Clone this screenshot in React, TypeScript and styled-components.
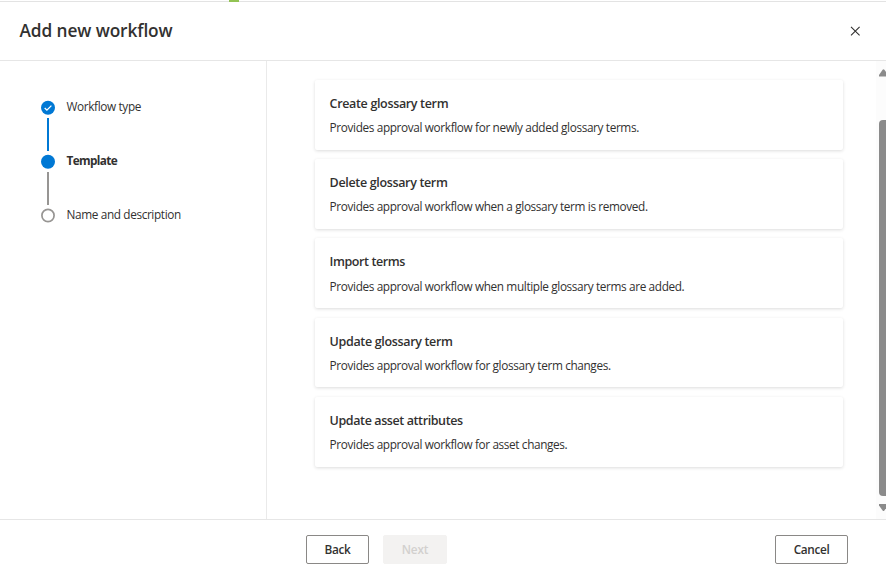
import React from "react";
import styled, { createGlobalStyle } from "styled-components";

const GlobalStyle = createGlobalStyle`
  * { box-sizing: border-box; }
  body {
    margin: 0;
    overflow: hidden;
    background: #fff;
    color: #323130;
    font-family: "Open Sans", "Noto Sans", sans-serif;
    font-size: 11.8px;
  }
`;

const Page = styled.div`
  width: 886px;
  height: 576px;
  display: flex;
  flex-direction: column;
  overflow: hidden;
`;

const TopEdge = styled.div`
  height: 2px;
  flex: none;
  border-bottom: 1px solid #e3e3e3;
  padding-left: 229px;
`;

const GreenMark = styled.div`
  width: 10px;
  height: 2px;
  background: #92c353;
`;

const Header = styled.header`
  height: 59px;
  flex: none;
  display: flex;
  align-items: center;
  justify-content: space-between;
  padding: 0 26px 0 19.5px;
  border-bottom: 1px solid #e6e6e6;
`;

const Title = styled.h1<{ $track: number }>`
  margin: 0;
  font-size: 17.3px;
  line-height: 24px;
  font-weight: 600;
  letter-spacing: ${(p) => p.$track}px;
  white-space: nowrap;
`;

const CloseButton = styled.button`
  display: flex;
  padding: 0;
  border: 0;
  background: none;
`;

const Body = styled.div`
  height: 458px;
  flex: none;
  display: flex;
`;

const Sidebar = styled.nav`
  width: 267px;
  flex: none;
  border-right: 1px solid #eaeaea;
  padding: 39px 0 0 41px;
`;

const Step = styled.div`
  height: 54px;
  display: flex;
  gap: 11.5px;
`;

const Rail = styled.div`
  width: 14px;
  display: flex;
  flex-direction: column;
  align-items: center;
  gap: 3px;
`;

const Marker = styled.svg`
  display: block;
  flex: none;
`;

const Connector = styled.div<{ $done?: boolean }>`
  width: 2px;
  height: 33px;
  background: ${(p) => (p.$done ? "#0078d4" : "#979593")};
`;

const StepLabel = styled.span<{ $current?: boolean; $track: number }>`
  line-height: 16px;
  margin-top: -2px;
  font-weight: ${(p) => (p.$current ? 700 : 400)};
  letter-spacing: ${(p) => p.$track}px;
  white-space: nowrap;
`;

const Content = styled.main`
  flex: 1;
  padding: 19px 0 0 48px;
`;

const CardList = styled.div`
  width: 528px;
  display: flex;
  flex-direction: column;
  gap: 9.4px;
`;

const Card = styled.article`
  height: 69.8px;
  padding: 15px 15px 0 14.6px;
  border-radius: 2px;
  background: #fff;
  box-shadow: 0 1px 3.6px rgba(0, 0, 0, 0.14);
`;

const CardTitle = styled.h2<{ $track: number }>`
  margin: 0 0 7.2px;
  font-size: 12.5px;
  line-height: 17px;
  font-weight: 600;
  letter-spacing: ${(p) => p.$track}px;
  white-space: nowrap;
`;

const CardText = styled.p<{ $track: number }>`
  margin: 0;
  line-height: 16px;
  letter-spacing: ${(p) => p.$track}px;
  white-space: nowrap;
`;

const ScrollTrack = styled.div`
  width: 10px;
  flex: none;
  display: flex;
  flex-direction: column;
  padding: 8px 0 7px 3px;
  background: #fcfcfc;
  overflow: hidden;
`;

const ScrollThumb = styled.div`
  width: 10px;
  height: 376px;
  flex: none;
  margin: 43px 0 8px;
  border-radius: 4px;
  background: #8b8b8b;
`;

const Footer = styled.footer`
  height: 57px;
  flex: none;
  display: flex;
  align-items: flex-start;
  gap: 14px;
  padding: 15px 38px 0 306px;
  border-top: 1px solid #e6e6e6;
`;

const Button = styled.button<{ $width: number; $track: number }>`
  width: ${(p) => p.$width}px;
  height: 29px;
  padding: 0 0 2px;
  border: 1px solid #8a8886;
  border-radius: 2px;
  background: #fff;
  color: #323130;
  font: 600 11.8px/16px "Open Sans", "Noto Sans", sans-serif;
  letter-spacing: ${(p) => p.$track}px;

  &:disabled {
    border-color: #f3f2f1;
    background: #f3f2f1;
    color: #d2d0ce;
  }
`;

const CancelButton = styled(Button)`
  margin-left: auto;
`;

type Status = "done" | "current" | "pending";

const steps: { label: string; status: Status; track: number }[] = [
  { label: "Workflow type", status: "done", track: -0.36 },
  { label: "Template", status: "current", track: -0.65 },
  { label: "Name and description", status: "pending", track: -0.37 },
];

const templates = [
  { title: "Create glossary term", tt: -0.34, text: "Provides approval workflow for newly added glossary terms.", dt: -0.365 },
  { title: "Delete glossary term", tt: -0.34, text: "Provides approval workflow when a glossary term is removed.", dt: -0.37 },
  { title: "Import terms", tt: -0.42, text: "Provides approval workflow when multiple glossary terms are added.", dt: -0.37 },
  { title: "Update glossary term", tt: -0.34, text: "Provides approval workflow for glossary term changes.", dt: -0.365 },
  { title: "Update asset attributes", tt: -0.4, text: "Provides approval workflow for asset changes.", dt: -0.37 },
];

function StepMarker({ status }: { status: Status }) {
  return (
    <Marker width="14" height="15" viewBox="0 0 14 15">
      {status === "pending" ? (
        <circle cx="7" cy="7.5" r="6.1" fill="#fff" stroke="#979593" strokeWidth="1.7" />
      ) : (
        <circle cx="7" cy="7.8" r="7" fill="#0078d4" />
      )}
      {status === "done" && (
        <path d="M3.7 8 L5.9 10.2 L10.4 5.6" fill="none" stroke="#fff" strokeWidth="1.3" />
      )}
    </Marker>
  );
}

export default function App() {
  return (
    <Page>
      <GlobalStyle />
      <TopEdge>
        <GreenMark />
      </TopEdge>
      <Header>
        <Title $track={-0.1}>Add new workflow</Title>
        <CloseButton aria-label="Close">
          <svg width="10" height="10" viewBox="0 0 10 10">
            <path d="M1 .8 L9.6 9.4 M9.6 .8 L1 9.4" stroke="#323130" strokeWidth="1.1" />
          </svg>
        </CloseButton>
      </Header>
      <Body>
        <Sidebar>
          {steps.map((s) => (
            <Step key={s.label}>
              <Rail>
                <StepMarker status={s.status} />
                {s.status !== "pending" && <Connector $done={s.status === "done"} />}
              </Rail>
              <StepLabel $current={s.status === "current"} $track={s.track}>
                {s.label}
              </StepLabel>
            </Step>
          ))}
        </Sidebar>
        <Content>
          <CardList>
            {templates.map((t) => (
              <Card key={t.title}>
                <CardTitle $track={t.tt}>{t.title}</CardTitle>
                <CardText $track={t.dt}>{t.text}</CardText>
              </Card>
            ))}
          </CardList>
        </Content>
        <ScrollTrack>
          <Marker width="10" height="8" viewBox="0 0 10 8">
            <path d="M0 7.5 V6 L3.6 .8 Q4.5 -.2 5.4 .8 L9 6 V7.5 Z" fill="#8b8b8b" />
          </Marker>
          <ScrollThumb />
          <Marker width="10" height="8" viewBox="0 0 10 8">
            <path d="M0 0 V1.5 L3.6 6.5 Q4.5 7.5 5.4 6.5 L9 1.5 V0 Z" fill="#8b8b8b" />
          </Marker>
        </ScrollTrack>
      </Body>
      <Footer>
        <Button $width={63} $track={-0.35}>Back</Button>
        <Button $width={64} $track={-0.2} disabled>Next</Button>
        <CancelButton $width={73} $track={-0.35}>Cancel</CancelButton>
      </Footer>
    </Page>
  );
}
